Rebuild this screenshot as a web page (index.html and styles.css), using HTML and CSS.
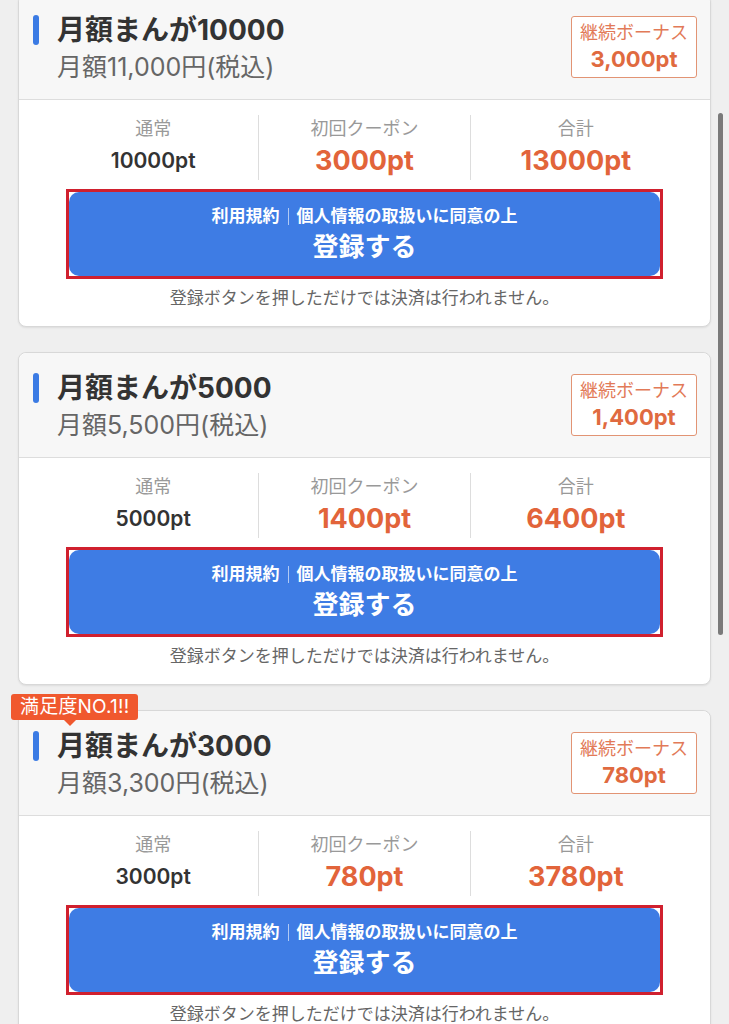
FILE: index.html
```html
<!DOCTYPE html>
<html lang="ja">
<head>
    <meta charset="UTF-8">
    <meta name="viewport" content="width=device-width, initial-scale=1.0">
    <title>月額まんが コース選択</title>
    <link rel="stylesheet" href="styles.css">
</head>
<body>

<div class="plan-list">

    <!-- 10000 -->
    <div class="plan first">
        <div class="plan-head">
            <div class="plan-name">
                <h2><span class="bar"></span>月額まんが10000</h2>
                <p class="price">月額11,000円(税込)</p>
            </div>
            <div class="bonus">
                <span class="bonus-label">継続ボーナス</span>
                <span class="bonus-value">3,000pt</span>
            </div>
        </div>
        <div class="plan-body">
            <div class="stats">
                <div class="stat">
                    <span class="stat-label">通常</span>
                    <span class="stat-value">10000pt</span>
                </div>
                <div class="stat">
                    <span class="stat-label">初回クーポン</span>
                    <span class="stat-value hot">3000pt</span>
                </div>
                <div class="stat">
                    <span class="stat-label">合計</span>
                    <span class="stat-value hot">13000pt</span>
                </div>
            </div>
            <div class="btn-frame">
                <button class="btn">
                    <span class="btn-sub">利用規約<i class="sep"></i>個人情報の取扱いに同意の上</span>
                    <span class="btn-main">登録する</span>
                </button>
            </div>
            <p class="note">登録ボタンを押しただけでは決済は行われません。</p>
        </div>
    </div>

    <!-- 5000 -->
    <div class="plan">
        <div class="plan-head">
            <div class="plan-name">
                <h2><span class="bar"></span>月額まんが5000</h2>
                <p class="price">月額5,500円(税込)</p>
            </div>
            <div class="bonus">
                <span class="bonus-label">継続ボーナス</span>
                <span class="bonus-value">1,400pt</span>
            </div>
        </div>
        <div class="plan-body">
            <div class="stats">
                <div class="stat">
                    <span class="stat-label">通常</span>
                    <span class="stat-value">5000pt</span>
                </div>
                <div class="stat">
                    <span class="stat-label">初回クーポン</span>
                    <span class="stat-value hot">1400pt</span>
                </div>
                <div class="stat">
                    <span class="stat-label">合計</span>
                    <span class="stat-value hot">6400pt</span>
                </div>
            </div>
            <div class="btn-frame">
                <button class="btn">
                    <span class="btn-sub">利用規約<i class="sep"></i>個人情報の取扱いに同意の上</span>
                    <span class="btn-main">登録する</span>
                </button>
            </div>
            <p class="note">登録ボタンを押しただけでは決済は行われません。</p>
        </div>
    </div>

    <!-- 3000 -->
    <div class="plan">
        <span class="ribbon">満足度NO.1!!</span>
        <div class="plan-head">
            <div class="plan-name">
                <h2><span class="bar"></span>月額まんが3000</h2>
                <p class="price">月額3,300円(税込)</p>
            </div>
            <div class="bonus">
                <span class="bonus-label">継続ボーナス</span>
                <span class="bonus-value">780pt</span>
            </div>
        </div>
        <div class="plan-body">
            <div class="stats">
                <div class="stat">
                    <span class="stat-label">通常</span>
                    <span class="stat-value">3000pt</span>
                </div>
                <div class="stat">
                    <span class="stat-label">初回クーポン</span>
                    <span class="stat-value hot">780pt</span>
                </div>
                <div class="stat">
                    <span class="stat-label">合計</span>
                    <span class="stat-value hot">3780pt</span>
                </div>
            </div>
            <div class="btn-frame">
                <button class="btn">
                    <span class="btn-sub">利用規約<i class="sep"></i>個人情報の取扱いに同意の上</span>
                    <span class="btn-main">登録する</span>
                </button>
            </div>
            <p class="note">登録ボタンを押しただけでは決済は行われません。</p>
        </div>
    </div>

</div>

<!-- scrollbar thumb -->
<div class="scroll-thumb"></div>

</body>
</html>
```

FILE: styles.css
```css
/* General Styling */
body {
    font-family: "Inter", "Noto Sans CJK JP", sans-serif;
    background-color: #efefef;
    margin: 0;
    padding: 0;
    color: #333;
    overflow: hidden;
}
.plan-list {
    width: 693px;
    margin-left: 18px;
}
.plan {
    position: relative;
    background-color: #fff;
    border: 1px solid #d8d8d8;
    border-radius: 8px;
    box-shadow: 0 1px 2px rgba(0, 0, 0, 0.08);
    margin-bottom: 25px;
}
.plan.first {
    margin-top: -6px;
}

/* Header */
.plan-head {
    display: flex;
    justify-content: space-between;
    align-items: center;
    height: 104px;
    padding: 0 13px 0 14px;
    background-color: #f7f7f7;
    border-bottom: 1px solid #ddd;
    border-radius: 8px 8px 0 0;
}
.plan-name h2 {
    display: flex;
    align-items: center;
    margin: 0;
    font-size: 28px;
    line-height: 36px;
    font-weight: bold;
    color: #333;
}
.plan-name .bar {
    display: inline-block;
    width: 6px;
    height: 30px;
    border-radius: 3px;
    background-color: #3b7be4;
    margin-right: 18px;
}
.plan-name .price {
    margin: 4px 0 0 24px;
    font-size: 25px;
    line-height: 30px;
    color: #666;
}
.bonus {
    display: flex;
    flex-direction: column;
    align-items: center;
    width: 124px;
    height: 60px;
    justify-content: center;
    border: 1.5px solid #e29474;
    border-radius: 3px;
    background-color: #fff;
    color: #e06a40;
}
.bonus-label {
    font-size: 18px;
    line-height: 24px;
    color: #e27a58;
}
.bonus-value {
    font-size: 22px;
    line-height: 28px;
    font-weight: bold;
}

/* Body */
.plan-body {
    padding: 15px 0 17px;
}
.stats {
    display: flex;
    width: 633px;
    margin: 0 auto;
}
.stat {
    flex: 1;
    display: flex;
    flex-direction: column;
    align-items: center;
    height: 65px;
}
.stat + .stat {
    border-left: 1px solid #ddd;
}
.stat-label {
    margin-top: 1px;
    font-size: 18px;
    line-height: 26px;
    color: #999;
}
.stat-value {
    margin-top: 3px;
    font-size: 21px;
    line-height: 32px;
    font-weight: 600;
    color: #333;
}
.stat-value.hot {
    font-size: 27px;
    font-weight: bold;
    color: #e2643a;
}

/* Register button */
.btn-frame {
    width: 591px;
    margin: 9px auto 0;
    border: 3px solid #d0202e;
    background-color: #fff;
}
.btn {
    display: flex;
    flex-direction: column;
    align-items: center;
    width: 100%;
    height: 84px;
    padding: 12px 0 0;
    border: none;
    border-radius: 10px;
    background-color: #3e7ce4;
    color: #fff;
    font-family: inherit;
    cursor: pointer;
}
.btn-sub {
    display: flex;
    align-items: center;
    font-size: 17px;
    line-height: 24px;
    font-weight: bold;
}
.btn-sub .sep {
    display: inline-block;
    width: 1px;
    height: 17px;
    background-color: rgba(255, 255, 255, 0.6);
    margin: 0 8px;
}
.btn-main {
    margin-top: 3px;
    font-size: 26px;
    line-height: 32px;
    font-weight: bold;
}
.note {
    margin: 8px 0 0;
    text-align: center;
    font-size: 17px;
    line-height: 22px;
    color: #666;
}

/* Ribbon */
.ribbon {
    position: absolute;
    top: -17px;
    left: -8px;
    z-index: 2;
    padding: 0 9px;
    height: 26px;
    line-height: 26px;
    border-radius: 3px;
    background-color: #f0582e;
    color: #fff;
    font-size: 19px;
    letter-spacing: 0.2px;
}
.ribbon::after {
    content: "";
    position: absolute;
    left: 53px;
    bottom: -6px;
    border-left: 6px solid transparent;
    border-right: 6px solid transparent;
    border-top: 6px solid #f0582e;
}

.scroll-thumb {
    position: fixed;
    top: 113px;
    right: 6px;
    width: 5px;
    height: 522px;
    border-radius: 3px;
    background-color: #7a7a7a;
}
```
